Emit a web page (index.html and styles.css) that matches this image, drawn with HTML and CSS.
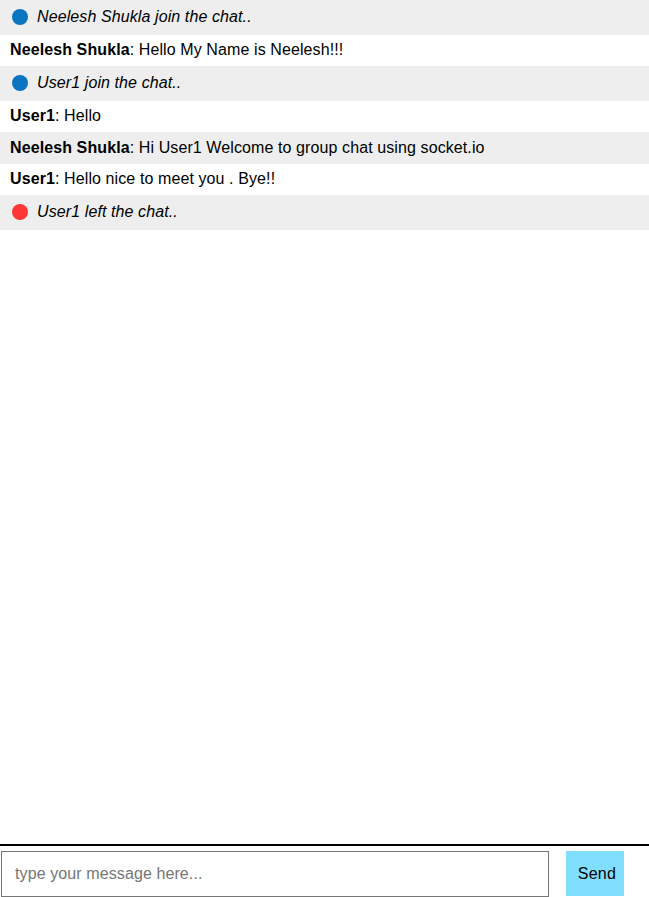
FILE: index.html
```html
<!DOCTYPE html>
<html>
<head>
<meta charset="utf-8">
<link rel="stylesheet" href="styles.css">
</head>
<body>
<div class="app">
  <ul class="messages">
    <li class="row event"><span class="dot dot-join"></span><em>Neelesh Shukla join the chat..</em></li>
    <li class="row msg"><b>Neelesh Shukla</b>: Hello My Name is Neelesh!!!</li>
    <li class="row event"><span class="dot dot-join"></span><em>User1 join the chat..</em></li>
    <li class="row msg"><b>User1</b>: Hello</li>
    <li class="row msg alt"><b>Neelesh Shukla</b>: Hi User1 Welcome to group chat using socket.io</li>
    <li class="row msg"><b>User1</b>: Hello nice to meet you . Bye!!</li>
    <li class="row event"><span class="dot dot-left"></span><em>User1 left the chat..</em></li>
  </ul>
  <form class="composer">
    <input class="input" type="text" placeholder="type your message here...">
    <button class="send" type="button">Send</button>
  </form>
</div>
</body>
</html>
```
FILE: styles.css
```css
html, body {
  margin: 0;
  padding: 0;
  height: 100%;
}
body {
  font-family: "Liberation Sans", Arial, sans-serif;
  font-size: 16px;
  color: #000;
  background: #fff;
  overflow: hidden;
}
.app {
  display: flex;
  flex-direction: column;
  height: 897px;
}
.messages {
  list-style: none;
  margin: 0;
  padding: 0;
  flex: 1;
}
.row {
  display: flex;
  align-items: center;
  padding: 0 10px;
  line-height: 18px;
  letter-spacing: 0.1px;
  box-sizing: border-box;
}
.event {
  background: #eeeeee;
  height: 34.5px;
}
.msg {
  height: 31.5px;
}
.alt {
  background: #eeeeee;
}
.row b {
  font-weight: bold;
}
.row em {
  font-style: italic;
}
.dot {
  width: 16px;
  height: 16px;
  border-radius: 50%;
  margin-left: 2px;
  margin-right: 9px;
  flex: none;
}
.dot-join {
  background: #0b74c1;
}
.dot-left {
  background: #ff3636;
}
.composer {
  display: flex;
  align-items: flex-start;
  border-top: 2px solid #000;
  padding: 5px 0 0 1px;
  margin: 0;
  height: 53px;
  box-sizing: border-box;
  flex: none;
}
.input {
  width: 548px;
  height: 46px;
  box-sizing: border-box;
  border: 1px solid #767676;
  border-radius: 0;
  padding: 0 13px;
  font-family: "Liberation Sans", Arial, sans-serif;
  font-size: 16px;
  letter-spacing: 0.1px;
  outline: none;
  margin: 0;
}
.input::placeholder {
  color: #757575;
}
.send {
  margin: 0 0 0 17px;
  width: 58px;
  height: 45px;
  border: none;
  border-radius: 0;
  background: #80dfff;
  font-family: "Liberation Sans", Arial, sans-serif;
  font-size: 16px;
  letter-spacing: 0.3px;
  color: #000;
  padding: 0 0 0 4px;
}
```
